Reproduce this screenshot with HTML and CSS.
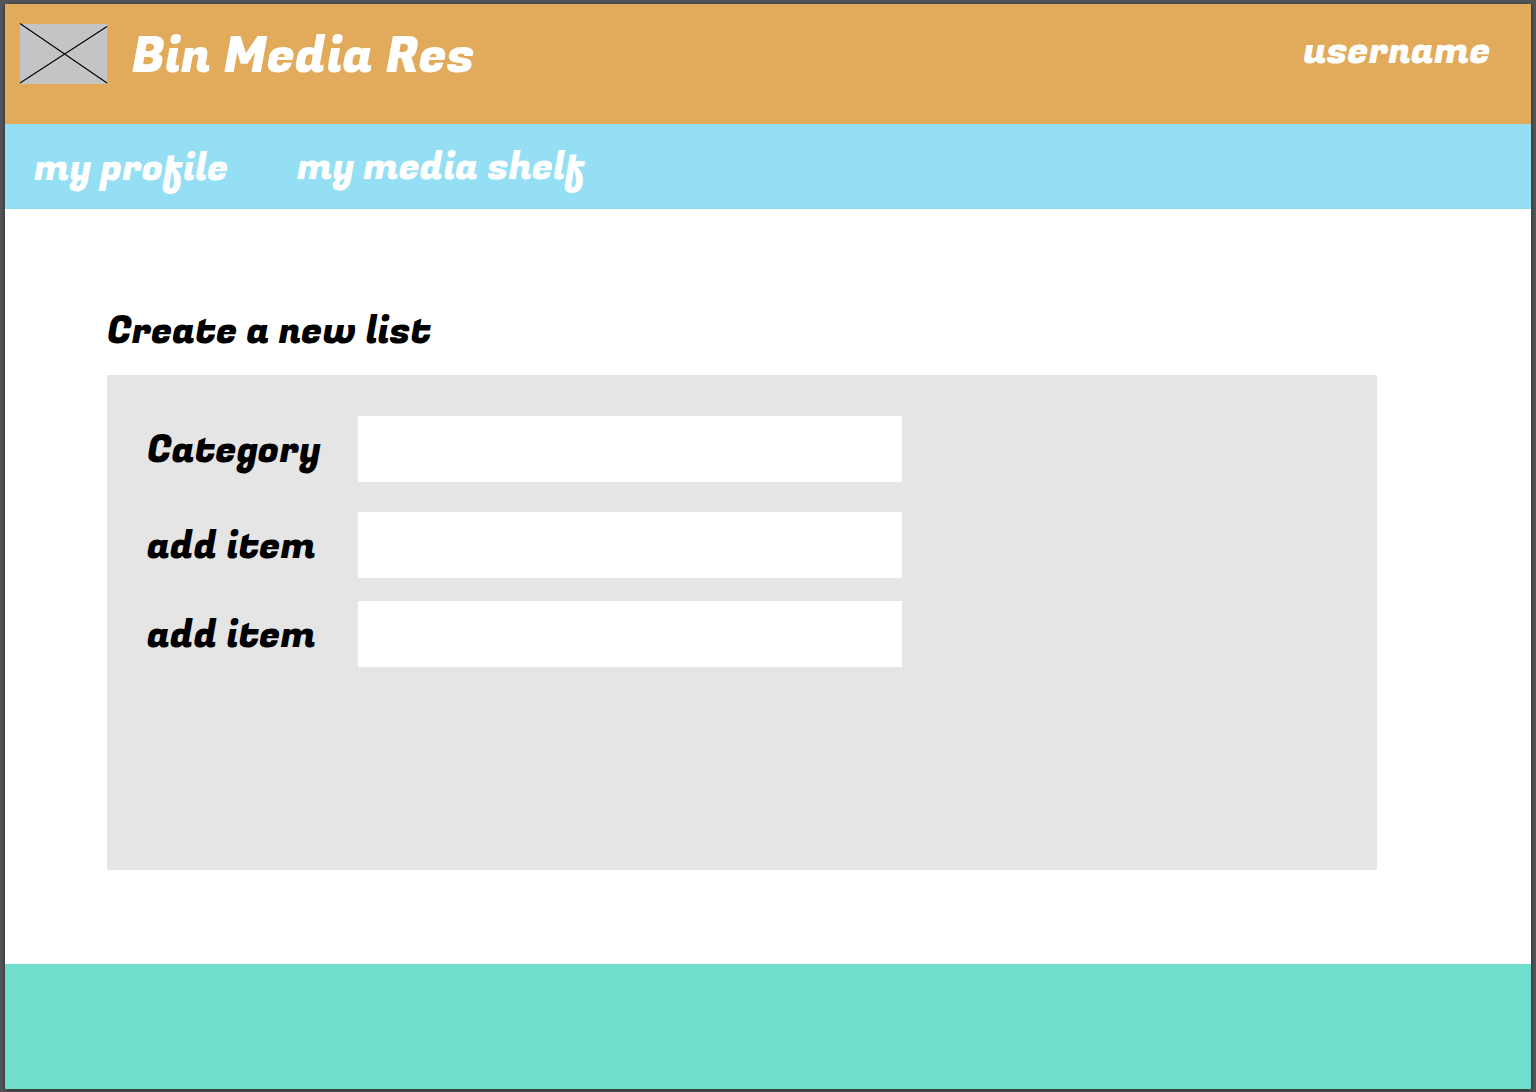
FILE: index.html
```html
<!DOCTYPE html>
<html lang="en">
<head>
<meta charset="utf-8">
<title>Bin Media Res</title>
<link rel="stylesheet" href="styles.css">
</head>
<body>
<div class="page">
  <header class="header">
    <svg class="logo" width="87" height="60" viewBox="0 0 87 60" aria-hidden="true">
      <rect width="87" height="60" fill="#c4c4c4"/>
      <path d="M0 -0.5L87 59M0 59L87 2.5" stroke="#000" stroke-width="1.1" fill="none"/>
    </svg>
    <h1 class="brand">Bin Media Res</h1>
    <span class="username">username</span>
  </header>
  <nav class="nav">
    <a class="link profile">my profile</a>
    <a class="link shelf">my media shelf</a>
  </nav>
  <main class="main">
    <h2 class="heading">Create a new list</h2>
    <form class="panel">
      <label class="row"><span class="label category">Category</span><input class="field" type="text"></label>
      <label class="row"><span class="label">add item</span><input class="field" type="text"></label>
      <label class="row"><span class="label">add item</span><input class="field" type="text"></label>
    </form>
  </main>
  <footer class="footer"></footer>
</div>
</body>
</html>
```
FILE: styles.css
```css
* { box-sizing: border-box; }
html, body { height: 100%; }
body {
  margin: 0;
  padding: 4px 5px 3px;
  overflow: hidden;
  background: #54575a;
  font: 400 38.15px/40px "Fugaz One", "Noto Sans", "Open Sans", sans-serif;
  color: #000;
}
.page {
  height: 1085px;
  display: flex;
  flex-direction: column;
  background: #fff;
  box-shadow: 0 1px 5px rgba(0, 0, 0, 0.55);
}
.header {
  height: 120px;
  display: flex;
  align-items: flex-start;
  padding: 20px 40.5px 0 15px;
  background: #e1ab5b;
  color: #fff;
}
.logo { flex: none; overflow: visible; }
.brand {
  margin: 6px 0 0 24.5px;
  font-size: 50.87px;
  line-height: 52px;
  font-weight: 400;
  white-space: nowrap;
}
.username { margin: 7px 0 0 auto; }
.nav {
  height: 85px;
  display: flex;
  align-items: flex-start;
  padding: 23px 29px 0;
  background: #95dff4;
  color: #fff;
}
.link { white-space: nowrap; }
.profile { width: 263px; padding-top: 1px; }
.main { flex: 1; padding: 102px 154px 0 102px; }
.heading { margin: 0 0 24px; font-size: 38.15px; line-height: 40px; font-weight: 400; }
.panel {
  height: 495px;
  display: flex;
  flex-direction: column;
  padding: 41px 40px 0;
  background: #e5e5e5;
}
.row { display: flex; align-items: center; height: 66px; margin-bottom: 23px; }
.row:first-child { margin-bottom: 30px; }
.label { width: 211px; padding-top: 2px; white-space: nowrap; }
.field { width: 544px; height: 66px; border: 0; padding: 0 16px; background: #fff; font: inherit; outline: 0; }
.footer { height: 125px; background: #6fdecd; }
```
